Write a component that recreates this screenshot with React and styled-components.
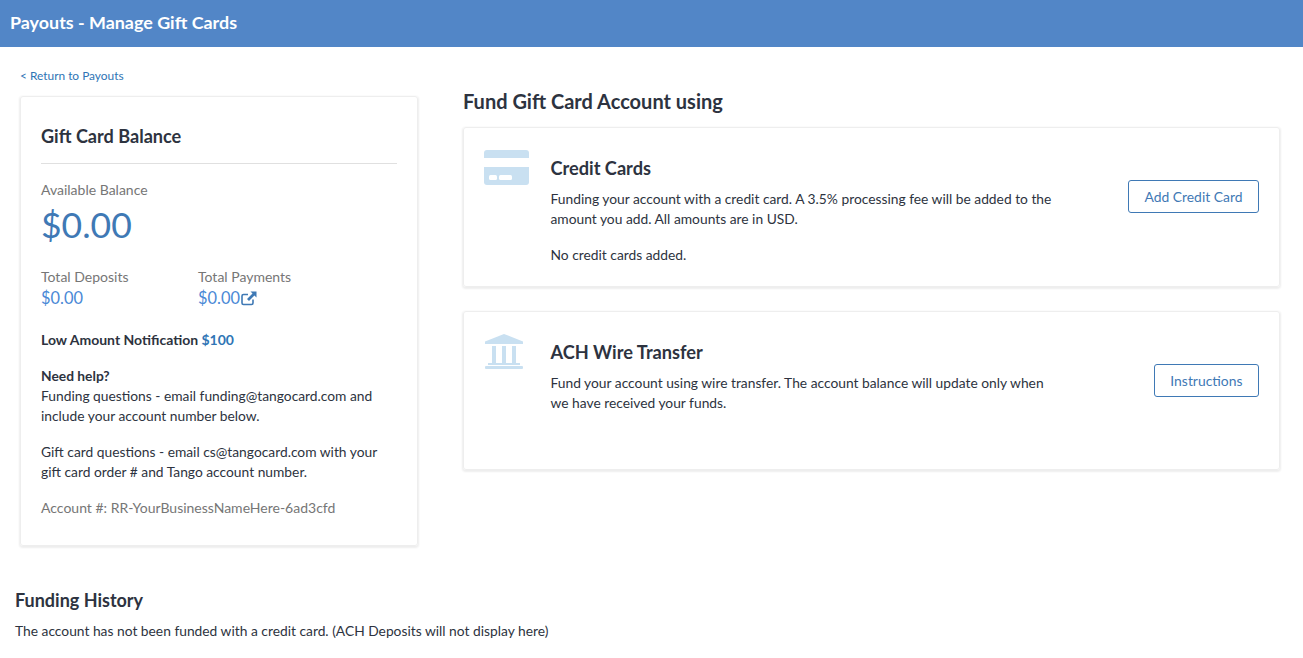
import React from "react";
import styled, { createGlobalStyle } from "styled-components";

const GlobalStyle = createGlobalStyle`
  html, body {
    margin: 0;
    padding: 0;
    background: #fff;
  }
  body {
    font-family: Lato, "Liberation Sans", sans-serif;
    color: #2d3340;
  }
  * {
    box-sizing: border-box;
  }
`;

const CardIcon = () => (
  <svg width="45" height="35" viewBox="0 0 45 35">
    <path d="M0 3a3 3 0 0 1 3-3h39a3 3 0 0 1 3 3v5H0z" fill="#c9e0f1" />
    <path d="M0 17h45v15a3 3 0 0 1-3 3H3a3 3 0 0 1-3-3z" fill="#c9e0f1" />
    <rect x="5" y="25" width="8" height="5" rx="1.5" fill="#fff" />
    <rect x="15" y="25" width="13" height="5" rx="1.5" fill="#fff" />
  </svg>
);

const BankIcon = () => (
  <svg width="39" height="35" viewBox="-1 0 39 35">
    <path d="M19 0 38 7.5V10H0V7.5z" fill="#c9e0f1" />
    <rect x="7" y="12" width="4" height="17" fill="#c9e0f1" />
    <rect x="17" y="12" width="4" height="17" fill="#c9e0f1" />
    <rect x="27" y="12" width="4" height="17" fill="#c9e0f1" />
    <rect x="3" y="29" width="32" height="2" fill="#c9e0f1" />
    <rect x="0" y="32" width="38" height="3" rx="1" fill="#c9e0f1" />
  </svg>
);

const ExternalIcon = () => (
  <svg width="16" height="15" viewBox="0 0 16 15" fill="none">
    <path
      d="M12 8.5V12a1.5 1.5 0 0 1-1.5 1.5h-8A1.5 1.5 0 0 1 1 12V5a1.5 1.5 0 0 1 1.5-1.5H7"
      stroke="#3f79b5"
      strokeWidth="1.6"
    />
    <path d="M9.5 0.5H15.5V6.5L13.4 4.5 8 10 6 8 11.5 2.5z" fill="#3f79b5" />
  </svg>
);

const App = () => {
  return (
    <>
      <GlobalStyle />
      <Header>Payouts - Manage Gift Cards</Header>
      <Content>
        <Columns>
          <LeftColumn>
            <BackLink href="#">&lt; Return to Payouts</BackLink>
            <BalanceCard>
              <BalanceTitle>Gift Card Balance</BalanceTitle>
              <Muted>Available Balance</Muted>
              <BigAmount>$0.00</BigAmount>
              <Totals>
                <TotalItem>
                  <Muted>Total Deposits</Muted>
                  <Amount>$0.00</Amount>
                </TotalItem>
                <TotalItem>
                  <Muted>Total Payments</Muted>
                  <Amount>
                    $0.00
                    <ExternalIcon />
                  </Amount>
                </TotalItem>
              </Totals>
              <Notification>
                Low Amount Notification <span>$100</span>
              </Notification>
              <HelpTitle>Need help?</HelpTitle>
              <Paragraph>
                Funding questions - email funding@tangocard.com and include your
                account number below.
              </Paragraph>
              <Paragraph>
                Gift card questions - email cs@tangocard.com with your gift card
                order # and Tango account number.
              </Paragraph>
              <Muted>Account #: RR-YourBusinessNameHere-6ad3cfd</Muted>
            </BalanceCard>
          </LeftColumn>
          <RightColumn>
            <FundTitle>Fund Gift Card Account using</FundTitle>
            <MethodCard $height={160}>
              <IconSlot>
                <CardIcon />
              </IconSlot>
              <MethodBody>
                <MethodTitle>Credit Cards</MethodTitle>
                <MethodText>
                  Funding your account with a credit card. A 3.5% processing fee
                  will be added to the amount you add. All amounts are in USD.
                </MethodText>
                <MethodNote>No credit cards added.</MethodNote>
              </MethodBody>
              <OutlineButton>Add Credit Card</OutlineButton>
            </MethodCard>
            <MethodCard $height={159}>
              <IconSlot>
                <BankIcon />
              </IconSlot>
              <MethodBody>
                <MethodTitle>ACH Wire Transfer</MethodTitle>
                <MethodText>
                  Fund your account using wire transfer. The account balance
                  will update only when we have received your funds.
                </MethodText>
              </MethodBody>
              <OutlineButton>Instructions</OutlineButton>
            </MethodCard>
          </RightColumn>
        </Columns>
        <History>
          <HistoryTitle>Funding History</HistoryTitle>
          <HistoryText>
            The account has not been funded with a credit card. (ACH Deposits
            will not display here)
          </HistoryText>
        </History>
      </Content>
    </>
  );
};

const Header = styled.header`
  height: 47px;
  background: #5286c7;
  color: #fff;
  font-size: 17.9px;
  font-weight: 700;
  line-height: 45px;
  padding-left: 10px;
`;

const Content = styled.main`
  padding: 0 15px;
`;

const Columns = styled.div`
  display: flex;
  padding: 0 8px 0 5px;
  gap: 45px;
`;

const LeftColumn = styled.section`
  width: 398px;
  flex: none;
`;

const BackLink = styled.a`
  display: block;
  margin-top: 22px;
  height: 27px;
  font-size: 11.9px;
  line-height: 14px;
  color: #2f75b5;
  text-decoration: none;
`;

const BalanceCard = styled.div`
  height: 450px;
  padding: 27px 20px 0 20px;
  border: 1px solid #eeeeee;
  border-radius: 3px;
  box-shadow: 0 1px 2px 1px rgba(0, 0, 0, 0.07);
  font-size: 13.8px;
  line-height: 20px;
`;

const BalanceTitle = styled.h2`
  margin: 0 0 16px;
  padding-bottom: 15px;
  border-bottom: 1px solid #e0e0e0;
  font-size: 18.1px;
  line-height: 24px;
  font-weight: 700;
`;

const Muted = styled.div`
  color: #767676;
  font-size: 14px;
  line-height: 20px;
`;

const BigAmount = styled.div`
  margin-top: 2px;
  font-size: 35.5px;
  line-height: 46px;
  color: #3f79b5;
`;

const Totals = styled.div`
  display: flex;
  margin-top: 19px;
`;

const TotalItem = styled.div`
  width: 157px;
`;

const Amount = styled.div`
  display: flex;
  align-items: center;
  gap: 1px;
  font-size: 16.4px;
  line-height: 22px;
  color: #4a89d6;
`;

const Notification = styled.div`
  margin-top: 21px;
  font-size: 14px;
  font-weight: 700;

  span {
    color: #2f75b5;
  }
`;

const HelpTitle = styled.div`
  margin-top: 16px;
  font-weight: 700;
`;

const Paragraph = styled.p`
  margin: 0 0 16px;
`;

const RightColumn = styled.section`
  flex: 1;
  padding-top: 41px;
`;

const FundTitle = styled.h2`
  margin: 0 0 13px;
  font-size: 20px;
  line-height: 26px;
  font-weight: 700;
`;

const MethodCard = styled.div`
  display: flex;
  align-items: flex-start;
  height: ${(p) => p.$height}px;
  margin-bottom: 24px;
  padding: 22px 20px 0 20px;
  border: 1px solid #eeeeee;
  border-radius: 3px;
  box-shadow: 0 1px 2px 1px rgba(0, 0, 0, 0.07);
`;

const IconSlot = styled.div`
  width: 66.5px;
  flex: none;
`;

const MethodBody = styled.div`
  flex: 1;
`;

const MethodTitle = styled.h3`
  margin: 6px 0 9px;
  font-size: 18.2px;
  line-height: 24px;
  font-weight: 700;
`;

const MethodText = styled.p`
  margin: 0;
  max-width: 505px;
  font-size: 13.8px;
  line-height: 20px;
`;

const MethodNote = styled.p`
  margin: 16px 0 0;
  font-size: 13.8px;
  line-height: 20px;
`;

const OutlineButton = styled.button`
  flex: none;
  height: 33px;
  margin-top: 30px;
  padding: 0 15.5px;
  border: 1px solid #3f79b5;
  border-radius: 3px;
  background: #fff;
  color: #3f79b5;
  font-family: inherit;
  font-size: 13.9px;
`;

const History = styled.section`
  margin-top: 42px;
`;

const HistoryTitle = styled.h2`
  margin: 0 0 9px;
  font-size: 18px;
  line-height: 24px;
  font-weight: 700;
`;

const HistoryText = styled.p`
  margin: 0;
  font-size: 13.8px;
  line-height: 20px;
`;

export default App;
